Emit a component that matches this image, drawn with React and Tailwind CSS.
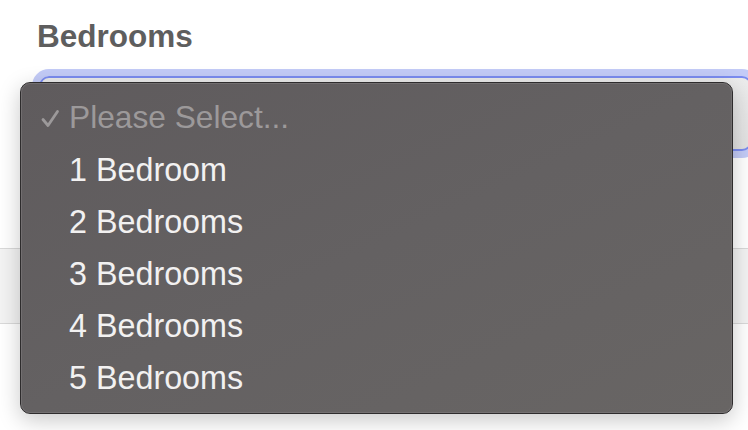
import React from 'react'

const options = ['1 Bedroom', '2 Bedrooms', '3 Bedrooms', '4 Bedrooms', '5 Bedrooms']

export default function App() {
  return (
    <div className="relative w-[748px] h-[430px] overflow-hidden bg-white" style={{ fontFamily: '"Liberation Sans", Arial, sans-serif' }}>
      {/* Label */}
      <div className="pl-[37px] pt-[18px] h-[69px]">
        <span className="text-[31.5px] leading-[36px] font-bold text-[#5e5e5e]">Bedrooms</span>
      </div>

      {/* Select (focused) */}
      <div className="ml-[39px] mt-[7px] h-[75px] w-[713px] rounded-[10px] border-2 border-[#7b8cf0] bg-gradient-to-b from-[#ececec] to-[#e2e2e2] shadow-[0_0_0_7px_#c3cbf7]" />

      {/* Band below */}
      <div className="mt-[97px] h-[76px] border-y border-[#d9d9d9] bg-[#f3f3f3]" />

      {/* Native menu */}
      <div className="absolute left-[20px] top-[82px] w-[713px] h-[332px] rounded-[10px] border border-[#2e2c2d] bg-gradient-to-br from-[#5f5b5d] via-[#646162] to-[#686564] shadow-[0_6px_22px_rgba(0,0,0,0.22)]">
        <div className="h-full rounded-[9px] border border-[#7d7a7b]/60 pt-[8px] pb-[10px]">
          <div className="relative flex h-[52px] items-center pl-[47px] text-[31.7px] text-[#9c999a]">
            <svg className="absolute left-[19px] top-[17px]" width="19" height="19" viewBox="0 0 19 19" fill="none">
              <path d="M2 10.5 L7 16.5 L16.5 2.5" stroke="#9c999a" strokeWidth="2.8" strokeLinecap="round" strokeLinejoin="round" />
            </svg>
            Please Select...
          </div>
          {options.map((o) => (
            <div key={o} className="flex h-[52px] items-center pl-[47px] text-[32.3px] text-[#f2f1f1]">
              {o}
            </div>
          ))}
        </div>
      </div>
    </div>
  )
}
